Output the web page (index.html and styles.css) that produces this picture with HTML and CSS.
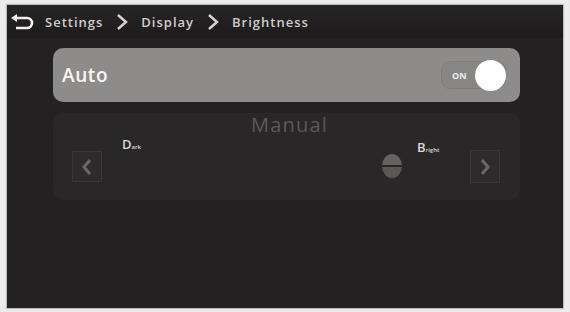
FILE: index.html
```html
<!DOCTYPE html>
<html>
<head>
<meta charset="utf-8">
<link rel="stylesheet" href="styles.css">
</head>
<body>
<div class="screen">
  <div class="topbar">
    <svg class="back" width="26" height="16" viewBox="0 0 26 16">
      <path d="M4 4 H17 A5 5 0 0 1 17 14 H6" fill="none" stroke="#f2f2f2" stroke-width="2.6"/>
      <path d="M1 4 L7 0 L7 8 Z" fill="#f2f2f2"/>
    </svg>
    <span class="crumb">Settings</span>
    <svg class="chev" width="14" height="18" viewBox="0 0 14 18"><path d="M3 2 L11 9 L3 16" fill="none" stroke="#d6d4d4" stroke-width="2.4"/></svg>
    <span class="crumb">Display</span>
    <svg class="chev" width="14" height="18" viewBox="0 0 14 18"><path d="M3 2 L11 9 L3 16" fill="none" stroke="#d6d4d4" stroke-width="2.4"/></svg>
    <span class="crumb">Brightness</span>
  </div>
  <div class="content">
    <div class="auto">
      <span class="auto-label">Auto</span>
      <div class="toggle">
        <span class="on">ON</span>
        <span class="knob"></span>
      </div>
    </div>
    <div class="manual">
      <div class="manual-title">Manual</div>
      <div class="manual-row">
        <div class="arrowbox">
          <svg width="16" height="20" viewBox="0 0 16 20"><path d="M11 3 L5 10 L11 17" fill="none" stroke="#6a6767" stroke-width="3"/></svg>
        </div>
        <div class="track">
          <span class="lbl dark">D<small>ark</small></span>
          <span class="lbl bright">B<small>right</small></span>
          <span class="thumb"></span>
        </div>
        <div class="arrowbox right">
          <svg width="16" height="20" viewBox="0 0 16 20"><path d="M5 3 L11 10 L5 17" fill="none" stroke="#6a6767" stroke-width="3"/></svg>
        </div>
      </div>
    </div>
  </div>
</div>
</body>
</html>
```

FILE: styles.css
```css
html, body {
  margin: 0;
  padding: 0;
  background: #ececec;
}
body {
  width: 570px;
  height: 312px;
  overflow: hidden;
  font-family: "Open Sans", "DejaVu Sans", sans-serif;
}
.screen {
  margin: 5px 7px 0 7px;
  height: 303px;
  background: #242122;
  box-shadow: 0 0 1px 1px #bdbbbb;
  display: flex;
  flex-direction: column;
}
.topbar {
  height: 33px;
  background: linear-gradient(#282526, #1c1a1b);
  display: flex;
  align-items: center;
  padding-left: 3px;
}
.back {
  margin-right: 9px;
}
.crumb {
  color: #cfcdcd;
  font-size: 13px;
  font-weight: 600;
  letter-spacing: 1px;
}
.chev {
  margin: 0 12px 0 12px;
}
.content {
  padding: 10px 43px 0 46px;
  display: flex;
  flex-direction: column;
  gap: 11px;
}
.auto {
  height: 54px;
  border-radius: 10px;
  background: #8e8b8b;
  display: flex;
  align-items: center;
  justify-content: space-between;
  padding: 0 14px 0 9px;
}
.auto-label {
  color: #f6f6f6;
  font-size: 19px;
  font-weight: 600;
  letter-spacing: 0.6px;
}
.toggle {
  width: 65px;
  height: 28px;
  border-radius: 9px;
  border: 1px solid #7f7c7c;
  background: #888585;
  display: flex;
  align-items: center;
  justify-content: space-between;
  box-sizing: border-box;
  padding-left: 10px;
}
.on {
  color: #ededed;
  font-size: 9px;
  font-weight: 700;
}
.knob {
  width: 31px;
  height: 31px;
  border-radius: 50%;
  background: #ffffff;
  margin-right: -1px;
}
.manual {
  height: 87px;
  border-radius: 10px;
  background: #2a2728;
  display: flex;
  flex-direction: column;
}
.manual-title {
  text-align: center;
  color: #5b5858;
  font-size: 20px;
  font-weight: 500;
  letter-spacing: 1.2px;
  line-height: 20px;
  padding-top: 2px;
  margin-left: 104px;
  width: 265px;
}
.manual-row {
  display: flex;
  align-items: flex-start;
  padding: 0 20px 0 19px;
}
.arrowbox {
  margin-top: 16px;
  width: 30px;
  height: 31px;
  box-sizing: border-box;
  border: 1px solid #3a3738;
  background: #2e2b2c;
  display: flex;
  align-items: center;
  justify-content: center;
}
.arrowbox.right {
  margin-top: 15px;
  height: 33px;
}
.track {
  flex: 1;
  height: 66px;
  position: relative;
}
.lbl {
  position: absolute;
  color: #d8d6d6;
  font-size: 13px;
  font-weight: 600;
}
.lbl small {
  font-size: 6px;
}
.dark {
  left: 20px;
  top: 0;
}
.bright {
  left: 315px;
  top: 3px;
}
.thumb {
  position: absolute;
  left: 280px;
  top: 19px;
  width: 20px;
  height: 24px;
  border-radius: 50%;
  background: linear-gradient(#656262 0, #656262 44%, #2a2728 44%, #2a2728 56%, #5a5757 56%);
}
```
